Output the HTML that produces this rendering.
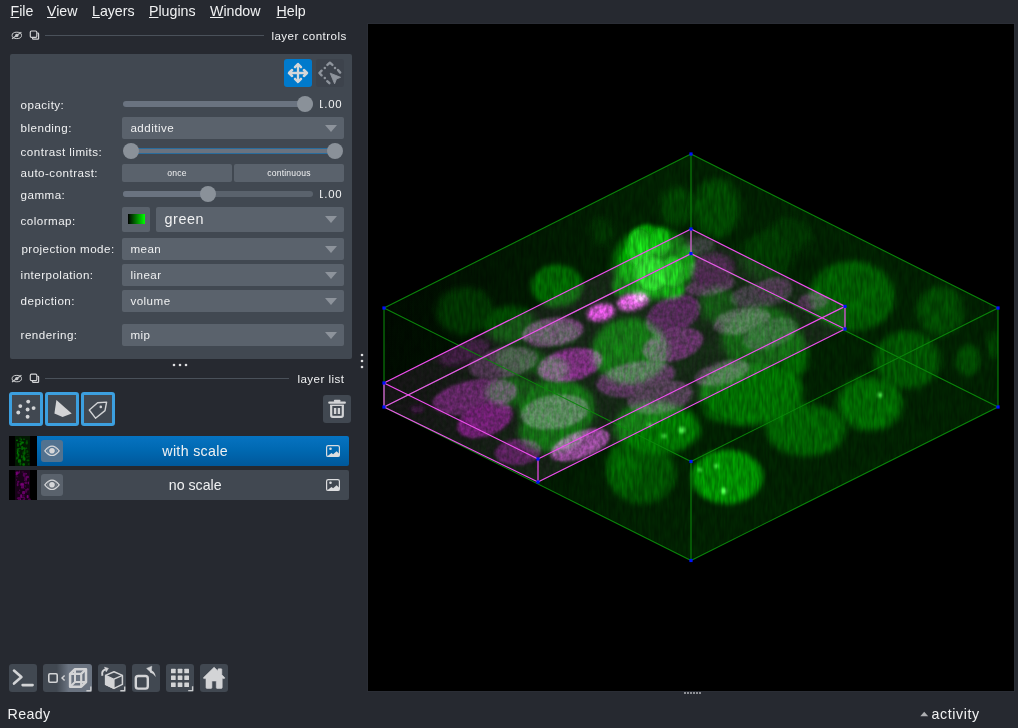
<!DOCTYPE html>
<html><head><meta charset="utf-8"><title>napari</title>
<style>
html,body{margin:0;padding:0;}
body{width:1018px;height:728px;overflow:hidden;background:#262930;position:relative;
 font-family:"Liberation Sans",sans-serif;color:#f0f1f2;}
.a{position:absolute;}
.t{position:absolute;white-space:nowrap;line-height:1;color:#f0f1f2;}
.menu{font-size:14.2px;top:4.4px;letter-spacing:0px;}
.menu u{text-decoration:underline;text-underline-offset:1px;text-decoration-thickness:1px;}
.lbl{font-size:11.6px;left:20.6px;letter-spacing:0.47px;}
.cb{position:absolute;left:122px;width:222px;height:22px;background:#5a626c;border-radius:2px;}
.cb span{position:absolute;left:8.4px;top:5.4px;font-size:11.6px;line-height:1;letter-spacing:0.47px;white-space:nowrap;}
.cb i{position:absolute;right:7px;top:7.5px;width:0;height:0;border-left:6.2px solid transparent;border-right:6.2px solid transparent;border-top:7.5px solid #8d939b;}
.trk{position:absolute;height:6px;border-radius:3px;}
.hd{position:absolute;width:16px;height:16px;border-radius:8px;background:#8a9199;}
.btn{position:absolute;background:#414851;border-radius:3px;}
.sbtn{position:absolute;height:18px;background:#5a626c;border-radius:2px;font-size:8.6px;text-align:center;line-height:18px;letter-spacing:0.2px;}
</style></head><body>
<div class="t menu" style="left:10.5px"><u>F</u>ile</div><div class="t menu" style="left:47px"><u>V</u>iew</div><div class="t menu" style="left:92px"><u>L</u>ayers</div><div class="t menu" style="left:149px"><u>P</u>lugins</div><div class="t menu" style="left:210px"><u>W</u>indow</div><div class="t menu" style="left:276.5px"><u>H</u>elp</div>
<!-- dock title: layer controls -->
<svg class="a" style="left:5px;top:25px" width="300" height="20" viewBox="5 25 300 20" ><g fill="none" stroke="#c9cacc" stroke-width="1"><ellipse cx="16.8" cy="35.4" rx="4.7" ry="3.2"/><circle cx="16.8" cy="35.4" r="1.7" fill="#c9cacc" stroke="none"/><path d="M12.0 38.8 L21.4 32.1" stroke-width="1.1"/></g><g fill="none" stroke="#d1d2d4" stroke-width="1.2"><path d="M32.6 37.8 V38.5 Q32.6 39.2 33.3 39.2 H37.9 Q38.6 39.2 38.6 38.5 V33.9 Q38.6 33.199999999999996 37.9 33.199999999999996 H37.3"/><rect x="30.3" y="31.0" width="6.5" height="6.4" rx="1.2" fill="#262930"/></g><rect x="45" y="35" width="219" height="1" fill="#4a515a"/></svg><div class="t" style="left:271.4px;top:29.799999999999997px;font-size:11.6px;letter-spacing:0.46px">layer controls</div>
<div class="a" style="left:10px;top:54px;width:342px;height:304.5px;background:#414851;border-radius:2px"></div>
<!-- mode buttons -->
<div class="a" style="left:284px;top:59px;width:28px;height:28px;background:#007acc;border-radius:3px"><svg width="28" height="28" viewBox="0 0 28 28" style="position:absolute;left:0;top:0"><path d="M14 5.5 V22.5 M5.5 14 H22.5" stroke="#d6d7d9" stroke-width="2.3" fill="none"/><g transform="rotate(0 14 14)"><path d="M11.0 8.1 L14 5.0 L17.0 8.1" fill="none" stroke="#d6d7d9" stroke-width="2.5" stroke-linecap="round" stroke-linejoin="round"/></g><g transform="rotate(90 14 14)"><path d="M11.0 8.1 L14 5.0 L17.0 8.1" fill="none" stroke="#d6d7d9" stroke-width="2.5" stroke-linecap="round" stroke-linejoin="round"/></g><g transform="rotate(180 14 14)"><path d="M11.0 8.1 L14 5.0 L17.0 8.1" fill="none" stroke="#d6d7d9" stroke-width="2.5" stroke-linecap="round" stroke-linejoin="round"/></g><g transform="rotate(270 14 14)"><path d="M11.0 8.1 L14 5.0 L17.0 8.1" fill="none" stroke="#d6d7d9" stroke-width="2.5" stroke-linecap="round" stroke-linejoin="round"/></g></svg></div>
<div class="a" style="left:316px;top:59px;width:28px;height:28px;background:#3d434c;border-radius:3px"><svg width="28" height="28" viewBox="0 0 28 28" style="position:absolute;left:0;top:0"><g fill="none" stroke="#8e949c" stroke-width="2.4" stroke-linecap="round" stroke-linejoin="round"><path d="M11.4 5.9 L13.9 3.7 L16.4 5.9"/><path d="M5.6 11.7 L3.4 14 L5.6 16.3"/><path d="M22.0 11.0 L24.2 13.6"/><path d="M11.2 22.2 L13.4 24.2"/></g><circle cx="8.8" cy="8.9" r="1.25" fill="#8e949c"/><circle cx="19.0" cy="8.9" r="1.25" fill="#8e949c"/><circle cx="8.8" cy="19.1" r="1.25" fill="#8e949c"/><path d="M14.2 14.2 L24.6 18.3 L20.4 20.0 L18.6 24.8 Z" fill="#8e949c" stroke="#8e949c" stroke-width="0.9" stroke-linejoin="round"/></svg></div>
<div class="t lbl" style="top:98.8px">opacity:</div><div class="t lbl" style="top:122.3px">blending:</div><div class="t lbl" style="top:145.8px">contrast limits:</div><div class="t lbl" style="top:167.3px">auto-contrast:</div><div class="t lbl" style="top:188.8px">gamma:</div><div class="t lbl" style="top:214.8px">colormap:</div><div class="t lbl" style="top:243.3px;left:21.4px">projection mode:</div><div class="t lbl" style="top:268.8px">interpolation:</div><div class="t lbl" style="top:294.8px">depiction:</div><div class="t lbl" style="top:328.8px">rendering:</div>
<!-- opacity slider -->
<div class="trk" style="left:123px;top:101px;width:190px;background:#6a7380"></div>
<div class="hd" style="left:297px;top:96px"></div>
<div class="a" style="left:319.6px;top:97px;width:25px;height:14px;overflow:hidden"><div class="t" style="left:-2.3px;top:1.9px;font-size:11.4px;letter-spacing:0.73px">1.00</div></div>
<div class="cb" style="top:117px"><span>additive</span><i></i></div><div class="cb" style="top:238px"><span>mean</span><i></i></div><div class="cb" style="top:264px"><span>linear</span><i></i></div><div class="cb" style="top:290px"><span>volume</span><i></i></div><div class="cb" style="top:324px"><span>mip</span><i></i></div>
<!-- contrast limits -->
<div class="a" style="left:131px;top:148px;width:204px;height:4px;background:#6a7380;border-top:1px solid #2a6c9c;border-bottom:1px solid #2a6c9c"></div>
<div class="hd" style="left:123px;top:143px"></div>
<div class="hd" style="left:327px;top:143px"></div>
<!-- auto-contrast -->
<div class="sbtn" style="left:122px;top:164px;width:110px">once</div>
<div class="sbtn" style="left:234px;top:164px;width:110px">continuous</div>
<!-- gamma -->
<div class="trk" style="left:123px;top:191px;width:190px;background:#5a626c"></div>
<div class="trk" style="left:123px;top:191px;width:88px;background:#6a7380"></div>
<div class="hd" style="left:200px;top:186px"></div>
<div class="a" style="left:319.6px;top:187px;width:25px;height:14px;overflow:hidden"><div class="t" style="left:-2.3px;top:1.9px;font-size:11.4px;letter-spacing:0.73px">1.00</div></div>
<!-- colormap -->
<div class="a" style="left:122px;top:207px;width:28px;height:24.5px;background:#5a626c;border-radius:2px"></div>
<div class="a" style="left:128px;top:214px;width:16.5px;height:10px;background:linear-gradient(90deg,#000,#00ff00)"></div>
<div class="cb" style="left:156px;top:207px;width:188px;height:25px"><span style="font-size:14.4px;top:5px;left:8.5px;letter-spacing:0.55px">green</span><i style="top:9px"></i></div>
<!-- splitter dots -->
<svg class="a" style="left:168px;top:362px" width="24" height="6" viewBox="168 362 24 6" ><circle cx="174" cy="365" r="1.3" fill="#dfe0e1"/><circle cx="180" cy="365" r="1.3" fill="#dfe0e1"/><circle cx="186" cy="365" r="1.3" fill="#dfe0e1"/></svg><svg class="a" style="left:359.3px;top:350px" width="6" height="24" viewBox="359.3 350 6 24" ><circle cx="362.3" cy="355" r="1.3" fill="#dfe0e1"/><circle cx="362.3" cy="361" r="1.3" fill="#dfe0e1"/><circle cx="362.3" cy="367" r="1.3" fill="#dfe0e1"/></svg>
<!-- dock title: layer list -->
<svg class="a" style="left:5px;top:368px" width="300" height="20" viewBox="5 368 300 20" ><g fill="none" stroke="#c9cacc" stroke-width="1"><ellipse cx="16.8" cy="378.6" rx="4.7" ry="3.2"/><circle cx="16.8" cy="378.6" r="1.7" fill="#c9cacc" stroke="none"/><path d="M12.0 382.0 L21.4 375.3" stroke-width="1.1"/></g><g fill="none" stroke="#d1d2d4" stroke-width="1.2"><path d="M32.6 381.0 V381.70000000000005 Q32.6 382.40000000000003 33.3 382.40000000000003 H37.9 Q38.6 382.40000000000003 38.6 381.70000000000005 V377.1 Q38.6 376.40000000000003 37.9 376.40000000000003 H37.3"/><rect x="30.3" y="374.20000000000005" width="6.5" height="6.4" rx="1.2" fill="#262930"/></g><rect x="45" y="378" width="244" height="1" fill="#4a515a"/></svg><div class="t" style="left:297.4px;top:373.0px;font-size:11.6px;letter-spacing:0.46px">layer list</div>
<!-- layer buttons -->
<div class="a" style="left:9px;top:392px;width:28px;height:28px;background:#414851;border:3px solid #3c9fdf;border-radius:3px"></div><div class="a" style="left:45px;top:392px;width:28px;height:28px;background:#414851;border:3px solid #3c9fdf;border-radius:3px"></div><div class="a" style="left:81px;top:392px;width:28px;height:28px;background:#414851;border:3px solid #3c9fdf;border-radius:3px"></div><svg class="a" style="left:9px;top:392px" width="110" height="34" viewBox="9 392 110 34" ><circle cx="28.2" cy="401.6" r="1.95" fill="#d3d4d6"/><circle cx="20.3" cy="406.1" r="1.95" fill="#d3d4d6"/><circle cx="33.6" cy="408.1" r="1.95" fill="#d3d4d6"/><circle cx="27.6" cy="409.5" r="1.95" fill="#d3d4d6"/><circle cx="18.3" cy="412.5" r="1.95" fill="#d3d4d6"/><circle cx="27.6" cy="416.8" r="1.95" fill="#d3d4d6"/><path d="M56.4 399.9 L71.7 413.4 L62.6 417.1 L54.4 413.4Z" fill="#d3d4d6"/><path d="M89.3 410 L97.6 402.8 L106.6 402.1 L105 410.6 L95.5 418.2Z" fill="none" stroke="#d3d4d6" stroke-width="1.4" stroke-linejoin="round"/><circle cx="100.8" cy="406.9" r="1.3" fill="#d3d4d6"/></svg><div class="a" style="left:323px;top:395px;width:28px;height:28px;background:#414851;border-radius:3px"></div><svg class="a" style="left:323px;top:395px" width="28" height="28" viewBox="323 395 28 28" ><rect x="328.2" y="401.6" width="17.7" height="2.1" rx="1" fill="#d3d4d6"/><rect x="333.9" y="399.7" width="6.6" height="2.4" rx="0.8" fill="#d3d4d6"/><path d="M331.2 405 V415.3 Q331.2 416.8 332.7 416.8 H341.3 Q342.8 416.8 342.8 415.3 V405" fill="none" stroke="#d3d4d6" stroke-width="2.2"/><rect x="333.9" y="408" width="2.4" height="6" fill="#d3d4d6"/><rect x="337.7" y="408" width="2.4" height="6" fill="#d3d4d6"/><rect x="330.1" y="404.6" width="13.7" height="1.4" fill="#d3d4d6"/></svg>
<!-- layer rows -->
<div class="a" style="left:37px;top:436px;width:312px;height:30px;background:linear-gradient(180deg,#0673c1 0%,#0069b2 45%,#00589b 100%);border-radius:0 2px 2px 0"></div><div class="a" style="left:37px;top:470px;width:312px;height:30px;background:#414851;border-radius:0 2px 2px 0"></div><div class="a" style="left:41px;top:440px;width:22px;height:22px;background:#52728f;border-radius:3px"></div><div class="a" style="left:41px;top:474px;width:22px;height:22px;background:#5a626c;border-radius:3px"></div><svg class="a" style="left:9px;top:436px" width="341" height="64" viewBox="9 436 341 64" ><rect x="9" y="436" width="28" height="30" fill="#000"/><rect x="15" y="436" width="15" height="30" fill="#021802"/><rect x="19.2" y="440.7" width="2.4" height="1.2" rx="0.8" fill="rgb(0,128,0)" opacity="0.62"/><rect x="16.2" y="452.8" width="3.0" height="1.6" rx="0.8" fill="rgb(0,71,0)" opacity="0.62"/><rect x="20.6" y="438.5" width="1.2" height="2.3" rx="0.8" fill="rgb(0,165,0)" opacity="0.62"/><rect x="22.4" y="463.0" width="2.4" height="2.7" rx="0.8" fill="rgb(0,67,0)" opacity="0.62"/><rect x="22.5" y="447.6" width="3.1" height="1.1" rx="0.8" fill="rgb(0,169,0)" opacity="0.62"/><rect x="16.7" y="448.2" width="2.2" height="2.7" rx="0.8" fill="rgb(0,131,0)" opacity="0.62"/><rect x="25.6" y="441.6" width="2.3" height="2.9" rx="0.8" fill="rgb(0,107,0)" opacity="0.62"/><rect x="16.3" y="456.4" width="2.2" height="2.9" rx="0.8" fill="rgb(0,123,0)" opacity="0.62"/><rect x="23.8" y="448.5" width="1.7" height="2.8" rx="0.8" fill="rgb(0,118,0)" opacity="0.62"/><rect x="19.7" y="443.5" width="1.4" height="3.3" rx="0.8" fill="rgb(0,70,0)" opacity="0.62"/><rect x="22.5" y="451.2" width="2.9" height="3.2" rx="0.8" fill="rgb(0,96,0)" opacity="0.62"/><rect x="22.9" y="438.5" width="2.1" height="1.5" rx="0.8" fill="rgb(0,103,0)" opacity="0.62"/><rect x="17.0" y="450.2" width="1.1" height="3.0" rx="0.8" fill="rgb(0,157,0)" opacity="0.62"/><rect x="22.3" y="458.6" width="2.8" height="2.0" rx="0.8" fill="rgb(0,104,0)" opacity="0.62"/><rect x="22.7" y="452.7" width="2.0" height="3.5" rx="0.8" fill="rgb(0,94,0)" opacity="0.62"/><rect x="21.2" y="455.1" width="1.1" height="3.1" rx="0.8" fill="rgb(0,142,0)" opacity="0.62"/><rect x="22.5" y="455.6" width="2.0" height="3.1" rx="0.8" fill="rgb(0,145,0)" opacity="0.62"/><rect x="19.5" y="462.8" width="1.8" height="2.8" rx="0.8" fill="rgb(0,123,0)" opacity="0.62"/><rect x="15.8" y="458.0" width="1.3" height="1.7" rx="0.8" fill="rgb(0,110,0)" opacity="0.62"/><rect x="26.9" y="450.4" width="1.4" height="2.2" rx="0.8" fill="rgb(0,95,0)" opacity="0.62"/><rect x="26.5" y="459.4" width="2.9" height="1.8" rx="0.8" fill="rgb(0,113,0)" opacity="0.62"/><rect x="27.8" y="455.6" width="1.8" height="1.7" rx="0.8" fill="rgb(0,70,0)" opacity="0.62"/><rect x="17.3" y="443.0" width="1.5" height="2.5" rx="0.8" fill="rgb(0,135,0)" opacity="0.62"/><rect x="17.4" y="444.4" width="1.3" height="2.6" rx="0.8" fill="rgb(0,138,0)" opacity="0.62"/><rect x="22.4" y="463.2" width="2.5" height="2.5" rx="0.8" fill="rgb(0,139,0)" opacity="0.62"/><rect x="23.5" y="457.2" width="2.0" height="3.6" rx="0.8" fill="rgb(0,147,0)" opacity="0.62"/><rect x="25.4" y="447.5" width="1.9" height="1.3" rx="0.8" fill="rgb(0,141,0)" opacity="0.62"/><rect x="20.2" y="441.8" width="3.2" height="2.3" rx="0.8" fill="rgb(0,74,0)" opacity="0.62"/><rect x="19.4" y="438.0" width="1.0" height="1.5" rx="0.8" fill="rgb(0,72,0)" opacity="0.62"/><rect x="27.3" y="453.7" width="1.2" height="1.6" rx="0.8" fill="rgb(0,108,0)" opacity="0.62"/><rect x="16.9" y="443.6" width="1.8" height="2.1" rx="0.8" fill="rgb(0,75,0)" opacity="0.62"/><rect x="16.5" y="450.2" width="3.2" height="2.4" rx="0.8" fill="rgb(0,99,0)" opacity="0.62"/><rect x="16.1" y="439.4" width="1.8" height="1.8" rx="0.8" fill="rgb(0,166,0)" opacity="0.62"/><rect x="24.0" y="451.0" width="1.5" height="3.9" rx="0.8" fill="rgb(0,106,0)" opacity="0.62"/><rect x="16.9" y="451.7" width="1.1" height="2.6" rx="0.8" fill="rgb(0,142,0)" opacity="0.62"/><rect x="26.2" y="456.0" width="1.6" height="2.1" rx="0.8" fill="rgb(0,81,0)" opacity="0.62"/><rect x="19.6" y="442.7" width="2.2" height="2.5" rx="0.8" fill="rgb(0,141,0)" opacity="0.62"/><rect x="17.9" y="459.2" width="3.2" height="3.6" rx="0.8" fill="rgb(0,163,0)" opacity="0.62"/><rect x="18.1" y="447.7" width="2.8" height="1.6" rx="0.8" fill="rgb(0,123,0)" opacity="0.62"/><rect x="19.6" y="437.3" width="1.1" height="1.8" rx="0.8" fill="rgb(0,93,0)" opacity="0.62"/><rect x="17.5" y="453.4" width="1.8" height="3.4" rx="0.8" fill="rgb(0,152,0)" opacity="0.62"/><rect x="27.8" y="463.2" width="1.8" height="1.7" rx="0.8" fill="rgb(0,89,0)" opacity="0.62"/><rect x="21.1" y="446.0" width="2.1" height="4.0" rx="0.8" fill="rgb(0,138,0)" opacity="0.62"/><rect x="25.9" y="449.9" width="2.4" height="3.4" rx="0.8" fill="rgb(0,70,0)" opacity="0.62"/><rect x="25.9" y="439.9" width="1.9" height="3.1" rx="0.8" fill="rgb(0,85,0)" opacity="0.62"/><rect x="21.2" y="441.5" width="2.7" height="2.0" rx="0.8" fill="rgb(0,162,0)" opacity="0.62"/><rect x="9" y="470" width="28" height="30" fill="#000"/><rect x="15" y="470" width="15" height="30" fill="#180218"/><rect x="20.9" y="486.2" width="3.0" height="2.4" rx="0.8" fill="rgb(125,0,125)" opacity="0.62"/><rect x="26.1" y="475.8" width="2.8" height="2.4" rx="0.8" fill="rgb(138,0,138)" opacity="0.62"/><rect x="25.3" y="473.1" width="1.7" height="1.3" rx="0.8" fill="rgb(163,0,163)" opacity="0.62"/><rect x="26.6" y="488.3" width="2.3" height="2.2" rx="0.8" fill="rgb(117,0,117)" opacity="0.62"/><rect x="23.5" y="487.7" width="1.3" height="1.0" rx="0.8" fill="rgb(127,0,127)" opacity="0.62"/><rect x="15.8" y="471.5" width="2.9" height="2.8" rx="0.8" fill="rgb(159,0,159)" opacity="0.62"/><rect x="21.0" y="482.8" width="2.9" height="2.6" rx="0.8" fill="rgb(141,0,141)" opacity="0.62"/><rect x="18.8" y="470.6" width="1.2" height="3.0" rx="0.8" fill="rgb(112,0,112)" opacity="0.62"/><rect x="28.0" y="498.4" width="2.8" height="3.1" rx="0.8" fill="rgb(100,0,100)" opacity="0.62"/><rect x="24.9" y="484.9" width="1.1" height="2.7" rx="0.8" fill="rgb(73,0,73)" opacity="0.62"/><rect x="20.2" y="494.2" width="1.9" height="3.9" rx="0.8" fill="rgb(168,0,168)" opacity="0.62"/><rect x="23.9" y="476.5" width="3.0" height="1.2" rx="0.8" fill="rgb(108,0,108)" opacity="0.62"/><rect x="27.7" y="481.6" width="1.2" height="2.9" rx="0.8" fill="rgb(159,0,159)" opacity="0.62"/><rect x="23.8" y="479.9" width="1.7" height="1.0" rx="0.8" fill="rgb(112,0,112)" opacity="0.62"/><rect x="24.9" y="473.8" width="1.5" height="1.3" rx="0.8" fill="rgb(67,0,67)" opacity="0.62"/><rect x="21.0" y="484.1" width="2.5" height="1.6" rx="0.8" fill="rgb(125,0,125)" opacity="0.62"/><rect x="17.5" y="491.0" width="1.3" height="2.9" rx="0.8" fill="rgb(74,0,74)" opacity="0.62"/><rect x="20.1" y="498.2" width="1.0" height="3.6" rx="0.8" fill="rgb(162,0,162)" opacity="0.62"/><rect x="22.7" y="498.4" width="1.0" height="1.6" rx="0.8" fill="rgb(169,0,169)" opacity="0.62"/><rect x="22.8" y="486.7" width="1.1" height="1.4" rx="0.8" fill="rgb(116,0,116)" opacity="0.62"/><rect x="18.4" y="492.1" width="1.7" height="1.9" rx="0.8" fill="rgb(69,0,69)" opacity="0.62"/><rect x="16.0" y="476.3" width="2.4" height="1.0" rx="0.8" fill="rgb(107,0,107)" opacity="0.62"/><rect x="19.8" y="483.2" width="3.1" height="2.5" rx="0.8" fill="rgb(133,0,133)" opacity="0.62"/><rect x="16.8" y="481.3" width="2.4" height="1.9" rx="0.8" fill="rgb(89,0,89)" opacity="0.62"/><rect x="25.6" y="477.5" width="1.4" height="3.2" rx="0.8" fill="rgb(130,0,130)" opacity="0.62"/><rect x="17.6" y="497.1" width="2.9" height="2.8" rx="0.8" fill="rgb(113,0,113)" opacity="0.62"/><rect x="15.6" y="473.6" width="2.1" height="1.8" rx="0.8" fill="rgb(154,0,154)" opacity="0.62"/><rect x="24.2" y="477.7" width="2.8" height="2.8" rx="0.8" fill="rgb(97,0,97)" opacity="0.62"/><rect x="21.8" y="496.5" width="3.1" height="1.4" rx="0.8" fill="rgb(121,0,121)" opacity="0.62"/><rect x="22.3" y="494.4" width="2.4" height="1.8" rx="0.8" fill="rgb(86,0,86)" opacity="0.62"/><rect x="24.7" y="472.4" width="1.9" height="1.7" rx="0.8" fill="rgb(65,0,65)" opacity="0.62"/><rect x="17.3" y="480.8" width="2.3" height="1.4" rx="0.8" fill="rgb(106,0,106)" opacity="0.62"/><rect x="16.8" y="483.1" width="1.7" height="3.2" rx="0.8" fill="rgb(126,0,126)" opacity="0.62"/><rect x="22.6" y="474.4" width="1.1" height="1.1" rx="0.8" fill="rgb(105,0,105)" opacity="0.62"/><rect x="24.1" y="497.5" width="1.0" height="2.9" rx="0.8" fill="rgb(121,0,121)" opacity="0.62"/><rect x="15.9" y="479.2" width="1.3" height="1.2" rx="0.8" fill="rgb(117,0,117)" opacity="0.62"/><rect x="22.1" y="491.1" width="3.0" height="3.2" rx="0.8" fill="rgb(150,0,150)" opacity="0.62"/><rect x="16.7" y="497.5" width="1.8" height="1.3" rx="0.8" fill="rgb(120,0,120)" opacity="0.62"/><rect x="26.7" y="494.9" width="1.9" height="3.4" rx="0.8" fill="rgb(170,0,170)" opacity="0.62"/><rect x="21.5" y="470.9" width="2.5" height="2.1" rx="0.8" fill="rgb(61,0,61)" opacity="0.62"/><rect x="22.9" y="472.7" width="2.4" height="4.0" rx="0.8" fill="rgb(113,0,113)" opacity="0.62"/><rect x="24.5" y="481.4" width="2.6" height="2.7" rx="0.8" fill="rgb(116,0,116)" opacity="0.62"/><rect x="21.0" y="485.7" width="2.1" height="2.5" rx="0.8" fill="rgb(99,0,99)" opacity="0.62"/><rect x="22.8" y="484.0" width="1.5" height="3.1" rx="0.8" fill="rgb(123,0,123)" opacity="0.62"/><rect x="25.1" y="489.0" width="2.1" height="3.7" rx="0.8" fill="rgb(107,0,107)" opacity="0.62"/><rect x="18.9" y="489.5" width="1.4" height="1.5" rx="0.8" fill="rgb(103,0,103)" opacity="0.62"/><path d="M44.8 450.8 Q52 441.40000000000003 59.2 450.8 Q52 460.2 44.8 450.8Z" fill="none" stroke="#d6d7d9" stroke-width="1.2"/><circle cx="52" cy="450.8" r="2.8" fill="#d6d7d9"/><circle cx="52" cy="450.8" r="4.3" fill="none" stroke="#d6d7d9" stroke-width="0.5" opacity="0.6"/><path d="M44.8 484.8 Q52 475.40000000000003 59.2 484.8 Q52 494.2 44.8 484.8Z" fill="none" stroke="#d6d7d9" stroke-width="1.2"/><circle cx="52" cy="484.8" r="2.8" fill="#d6d7d9"/><circle cx="52" cy="484.8" r="4.3" fill="none" stroke="#d6d7d9" stroke-width="0.5" opacity="0.6"/><rect x="326.6" y="445.6" width="12.8" height="10.9" rx="1.6" fill="none" stroke="#dcdddf" stroke-width="1.2"/><circle cx="330.5" cy="448.7" r="1.3" fill="#dcdddf"/><path d="M327.6 456 L331.5 453.1 L333.1 454.2 L336.6 451.2 L339.2 453.8 V456Z" fill="#dcdddf"/><rect x="326.6" y="479.6" width="12.8" height="10.9" rx="1.6" fill="none" stroke="#dcdddf" stroke-width="1.2"/><circle cx="330.5" cy="482.7" r="1.3" fill="#dcdddf"/><path d="M327.6 490 L331.5 487.1 L333.1 488.2 L336.6 485.2 L339.2 487.8 V490Z" fill="#dcdddf"/></svg><div class="t" style="left:162.3px;top:443.6px;font-size:14.2px;letter-spacing:0.34px">with scale</div><div class="t" style="left:168.8px;top:477.6px;font-size:14.2px;letter-spacing:0px">no scale</div>
<!-- bottom buttons -->
<div class="a" style="left:9px;top:664px;width:28px;height:28px;background:#414851;border-radius:3px"></div><div class="a" style="left:98px;top:664px;width:28px;height:28px;background:#414851;border-radius:3px"></div><div class="a" style="left:132px;top:664px;width:28px;height:28px;background:#414851;border-radius:3px"></div><div class="a" style="left:166px;top:664px;width:28px;height:28px;background:#414851;border-radius:3px"></div><div class="a" style="left:200px;top:664px;width:28px;height:28px;background:#414851;border-radius:3px"></div><div class="a" style="left:43px;top:664px;width:49px;height:28px;border-radius:3px;background:linear-gradient(90deg,#414851 0%,#414851 28%,#6a7380 52%,#6a7380 100%)"></div><svg class="a" style="left:9px;top:664px" width="220" height="28" viewBox="9 664 220 28" ><path d="M14 670.6 L21.4 677.1 L14 683.6" fill="none" stroke="#d3d4d6" stroke-width="2.6" stroke-linecap="round" stroke-linejoin="round"/><path d="M22.6 685.1 H32.6" stroke="#d3d4d6" stroke-width="2.6" stroke-linecap="round"/><rect x="48.8" y="673.8" width="8.4" height="8.4" rx="1.2" fill="none" stroke="#d3d4d6" stroke-width="1.6"/><path d="M64.6 675.4 L62 678 L64.6 680.6" fill="none" stroke="#d3d4d6" stroke-width="1.4"/><g fill="none" stroke="#d3d4d6" stroke-linejoin="round"><path d="M70.1 673.9 L75.0 669.2 H86.0 V682.0 L81.2 686.7 H70.1Z" stroke-width="2.5"/><path d="M70.1 673.9 H81.2 V686.7 M81.2 673.9 L86.0 669.2" stroke-width="2.2"/><path d="M75.0 669.2 V682.0 H86.0 M75.0 682.0 L70.1 686.7" stroke-width="2.0"/></g><path d="M86.4 690.8 H90.80000000000001 V686.4" fill="none" stroke="#c9cacc" stroke-width="1.4"/><g stroke="#d3d4d6" stroke-linejoin="round"><path d="M105.6 675.4 L114 671.8 L122.4 675.4 V684.4 L114 688.4 L105.6 684.4Z" fill="none" stroke-width="1.5"/><path d="M105.6 675.4 L114 679.2 V688.4 L105.6 684.4Z" fill="#d3d4d6" stroke-width="1.2"/><path d="M114 679.2 L122.4 675.4" fill="none" stroke-width="1.4"/></g><path d="M102.4 675.8 Q101.2 670.6 105.6 669.4" fill="none" stroke="#d3d4d6" stroke-width="1.9"/><path d="M104.6 667.2 L108.4 668.4 L106.2 671.8Z" fill="#d3d4d6" stroke="#d3d4d6" stroke-width="0.6" stroke-linejoin="round"/><path d="M120.3 690.8 H124.7 V686.4" fill="none" stroke="#c9cacc" stroke-width="1.4"/><rect x="135.8" y="676" width="12" height="12.6" rx="2.4" fill="none" stroke="#d3d4d6" stroke-width="2.4"/><path d="M155.8 677 Q155 670.8 149.4 669.8 L150.2 672.6 Q153.2 673.6 155.8 677Z" fill="#d3d4d6"/><path d="M146.6 668.4 L151.8 666.2 L151.2 672.6Z" fill="#d3d4d6" stroke="#d3d4d6" stroke-width="0.5" stroke-linejoin="round"/><rect x="171" y="668.8" width="4.7" height="4.5" rx="0.5" fill="#d3d4d6"/><rect x="171" y="675.6" width="4.7" height="4.5" rx="0.5" fill="#d3d4d6"/><rect x="171" y="682.4" width="4.7" height="4.5" rx="0.5" fill="#d3d4d6"/><rect x="177.7" y="668.8" width="4.7" height="4.5" rx="0.5" fill="#d3d4d6"/><rect x="177.7" y="675.6" width="4.7" height="4.5" rx="0.5" fill="#d3d4d6"/><rect x="177.7" y="682.4" width="4.7" height="4.5" rx="0.5" fill="#d3d4d6"/><rect x="184.3" y="668.8" width="4.7" height="4.5" rx="0.5" fill="#d3d4d6"/><rect x="184.3" y="675.6" width="4.7" height="4.5" rx="0.5" fill="#d3d4d6"/><rect x="184.3" y="682.4" width="4.7" height="4.5" rx="0.5" fill="#d3d4d6"/><path d="M188.2 690.6 H192.6 V686.2" fill="none" stroke="#c9cacc" stroke-width="1.4"/><path d="M214.1 667.2 L217.9 670.9 V669.4 Q217.9 668.8 218.5 668.8 H221.2 Q221.8 668.8 221.8 669.4 V674.8 L224.7 677.6 Q225 678.6 224 678.6 H222.2 V687.6 Q222.2 688.4 221.4 688.4 H217 Q216.3 688.4 216.3 687.6 V681 H211.9 V687.6 Q211.9 688.4 211.1 688.4 H206.8 Q206 688.4 206 687.6 V678.6 H204.2 Q203.2 678.6 203.5 677.6 Z" fill="#d3d4d6" stroke="#d3d4d6" stroke-width="0.6" stroke-linejoin="round"/></svg>
<!-- status bar -->
<div class="t" style="left:7.6px;top:707.2px;font-size:14.2px;letter-spacing:0.36px">Ready</div>
<svg class="a" style="left:920px;top:711px" width="10" height="6"><path d="M0.3 5.2 L4.2 0.8 L8.2 5.2Z" fill="#aeafb2"/></svg>
<div class="t" style="left:931.6px;top:707.2px;font-size:14.2px;letter-spacing:0.6px">activity</div>
<!-- bottom splitter handle -->
<div class="a" style="left:684px;top:691.5px;width:17px;height:2px;background:repeating-linear-gradient(90deg,#8c8e93 0 2px,transparent 2px 3px)"></div>
<!-- canvas -->
<div class="a" style="left:367px;top:23px;width:648px;height:669px;background:#2a2d35"></div>
<svg class="a" style="left:368px;top:24px;background:#000" width="646" height="667" viewBox="368 24 646 667"><defs><clipPath id="hx"><polygon points="691,154 998,308 998,407 691,560.5 384,407 384,308"/></clipPath><clipPath id="mx"><polygon points="691,229 845,306.4 845,329 538,482 384,407 384,383"/></clipPath><filter id="b1_5" x="-50%" y="-50%" width="200%" height="200%"><feGaussianBlur stdDeviation="1.5"/></filter><filter id="b2" x="-50%" y="-50%" width="200%" height="200%"><feGaussianBlur stdDeviation="2"/></filter><filter id="b2_5" x="-50%" y="-50%" width="200%" height="200%"><feGaussianBlur stdDeviation="2.5"/></filter><filter id="b3" x="-50%" y="-50%" width="200%" height="200%"><feGaussianBlur stdDeviation="3"/></filter><filter id="b4" x="-50%" y="-50%" width="200%" height="200%"><feGaussianBlur stdDeviation="4"/></filter><filter id="b5" x="-50%" y="-50%" width="200%" height="200%"><feGaussianBlur stdDeviation="5"/></filter><linearGradient id="lg" gradientUnits="userSpaceOnUse" x1="384" y1="0" x2="640" y2="0"><stop offset="0" stop-color="#000" stop-opacity="0.7"/><stop offset="0.5" stop-color="#000" stop-opacity="0.3"/><stop offset="1" stop-color="#000" stop-opacity="0"/></linearGradient><pattern id="vs" width="3" height="8" patternUnits="userSpaceOnUse"><rect x="0" y="0" width="1" height="8" fill="#000" opacity="0.045"/></pattern><filter id="tex" x="0" y="0" width="100%" height="100%" color-interpolation-filters="sRGB"><feTurbulence type="fractalNoise" baseFrequency="0.33 0.07" numOctaves="2" seed="4" result="n"/><feColorMatrix in="n" type="matrix" values="0 1.8 0 0 -0.4  0 1.8 0 0 -0.4  0 1.8 0 0 -0.4  0 0 0 0 1" result="m"/><feComposite in="SourceGraphic" in2="m" operator="arithmetic" k1="0.42" k2="0.80" k3="0" k4="0"/></filter><filter id="texm" x="0" y="0" width="100%" height="100%" color-interpolation-filters="sRGB"><feTurbulence type="fractalNoise" baseFrequency="0.3 0.22" numOctaves="2" seed="9" result="n"/><feColorMatrix in="n" type="matrix" values="0 1.8 0 0 -0.4  0 1.8 0 0 -0.4  0 1.8 0 0 -0.4  0 0 0 0 1" result="m"/><feComposite in="SourceGraphic" in2="m" operator="arithmetic" k1="0.5" k2="0.76" k3="0" k4="0"/></filter></defs><g clip-path="url(#hx)"><g filter="url(#tex)"><polygon points="691,154 998,308 998,407 691,560.5 384,407 384,308" fill="#012001"/><polygon points="691,154 998,308 998,407 691,560.5 384,407 384,308" fill="url(#lg)"/><ellipse cx="676" cy="206" rx="16" ry="20" fill="rgb(2,63,2)" filter="url(#b3)" style="mix-blend-mode:lighten"/><ellipse cx="716" cy="208" rx="24" ry="30" fill="rgb(2,68,2)" filter="url(#b3)" style="mix-blend-mode:lighten"/><ellipse cx="602" cy="232" rx="13" ry="14" fill="rgb(2,46,2)" filter="url(#b3)" style="mix-blend-mode:lighten"/><ellipse cx="788" cy="236" rx="24" ry="19" fill="rgb(2,49,2)" filter="url(#b3)" style="mix-blend-mode:lighten"/><ellipse cx="766" cy="256" rx="26" ry="24" fill="rgb(2,56,2)" filter="url(#b3)" style="mix-blend-mode:lighten"/><ellipse cx="557" cy="286" rx="26" ry="21" fill="rgb(2,101,2)" filter="url(#b2_5)" style="mix-blend-mode:lighten"/><ellipse cx="465" cy="311" rx="29" ry="24" fill="rgb(2,48,2)" filter="url(#b3)" style="mix-blend-mode:lighten"/><ellipse cx="511" cy="325" rx="26" ry="19" fill="rgb(2,72,2)" filter="url(#b3)" style="mix-blend-mode:lighten"/><ellipse cx="852" cy="296" rx="43" ry="35" fill="rgb(2,90,2)" filter="url(#b3)" style="mix-blend-mode:lighten"/><ellipse cx="940" cy="311" rx="24" ry="25" fill="rgb(2,70,2)" filter="url(#b3)" style="mix-blend-mode:lighten"/><ellipse cx="907" cy="360" rx="33" ry="29" fill="rgb(2,83,2)" filter="url(#b3)" style="mix-blend-mode:lighten"/><ellipse cx="968" cy="360" rx="12" ry="16" fill="rgb(2,72,2)" filter="url(#b2_5)" style="mix-blend-mode:lighten"/><ellipse cx="993" cy="345" rx="6" ry="14" fill="rgb(2,60,2)" filter="url(#b2)" style="mix-blend-mode:lighten"/><ellipse cx="870" cy="404" rx="33" ry="27" fill="rgb(2,101,2)" filter="url(#b3)" style="mix-blend-mode:lighten"/><ellipse cx="806" cy="430" rx="40" ry="26" fill="rgb(2,94,2)" filter="url(#b3)" style="mix-blend-mode:lighten"/><ellipse cx="751" cy="392" rx="52" ry="33" fill="rgb(2,110,2)" filter="url(#b3)" style="mix-blend-mode:lighten"/><ellipse cx="761" cy="338" rx="40" ry="32" fill="rgb(2,92,2)" filter="url(#b3)" style="mix-blend-mode:lighten"/><ellipse cx="718" cy="305" rx="19" ry="18" fill="rgb(2,77,2)" filter="url(#b3)" style="mix-blend-mode:lighten"/><ellipse cx="727" cy="477" rx="36" ry="27" fill="rgb(2,140,2)" filter="url(#b2_5)" style="mix-blend-mode:lighten"/><ellipse cx="642" cy="474" rx="34" ry="30" fill="rgb(2,79,2)" filter="url(#b3)" style="mix-blend-mode:lighten"/><ellipse cx="657" cy="428" rx="43" ry="26" fill="rgb(2,118,2)" filter="url(#b3)" style="mix-blend-mode:lighten"/><ellipse cx="630" cy="351" rx="38" ry="33" fill="rgb(2,110,2)" filter="url(#b3)" style="mix-blend-mode:lighten"/><ellipse cx="557" cy="409" rx="38" ry="30" fill="rgb(2,107,2)" filter="url(#b3)" style="mix-blend-mode:lighten"/><ellipse cx="520" cy="360" rx="25" ry="15" fill="rgb(2,70,2)" filter="url(#b3)" style="mix-blend-mode:lighten"/><ellipse cx="794" cy="356" rx="14" ry="22" fill="rgb(2,101,2)" filter="url(#b3)" style="mix-blend-mode:lighten"/><ellipse cx="551" cy="432" rx="32" ry="20" fill="rgb(2,105,2)" filter="url(#b3)" style="mix-blend-mode:lighten"/><ellipse cx="623" cy="467" rx="16" ry="24" fill="rgb(2,94,2)" filter="url(#b3)" style="mix-blend-mode:lighten"/><ellipse cx="733" cy="411" rx="30" ry="12" fill="rgb(2,88,2)" filter="url(#b3)" style="mix-blend-mode:lighten"/><ellipse cx="553" cy="333" rx="28" ry="13" fill="rgb(2,68,2)" filter="url(#b2_5)" style="mix-blend-mode:lighten"/><ellipse cx="552" cy="369" rx="17" ry="13" fill="rgb(2,88,2)" filter="url(#b2_5)" style="mix-blend-mode:lighten"/><ellipse cx="512" cy="392" rx="26" ry="15" fill="rgb(2,85,2)" filter="url(#b3)" style="mix-blend-mode:lighten"/><ellipse cx="653" cy="264" rx="41" ry="37" fill="rgb(0,105,0)" filter="url(#b3)" style="mix-blend-mode:lighten"/><ellipse cx="640" cy="248" rx="13" ry="20" fill="rgb(18,200,18)" filter="url(#b2)" style="mix-blend-mode:lighten"/><ellipse cx="660" cy="242" rx="11" ry="14" fill="rgb(9,185,9)" filter="url(#b2)" style="mix-blend-mode:lighten"/><ellipse cx="652" cy="274" rx="17" ry="17" fill="rgb(27,215,27)" filter="url(#b2_5)" style="mix-blend-mode:lighten"/><ellipse cx="629" cy="266" rx="10" ry="18" fill="rgb(0,170,0)" filter="url(#b2)" style="mix-blend-mode:lighten"/><ellipse cx="673" cy="272" rx="12" ry="16" fill="rgb(12,190,12)" filter="url(#b2)" style="mix-blend-mode:lighten"/><ellipse cx="650" cy="289" rx="22" ry="7" fill="rgb(0,150,0)" filter="url(#b2)" style="mix-blend-mode:lighten"/><ellipse cx="620" cy="286" rx="8" ry="10" fill="rgb(0,120,0)" filter="url(#b2)" style="mix-blend-mode:lighten"/><ellipse cx="686" cy="262" rx="8" ry="16" fill="rgb(0,150,0)" filter="url(#b2)" style="mix-blend-mode:lighten"/><ellipse cx="647" cy="232" rx="9" ry="7" fill="rgb(0,160,0)" filter="url(#b2)" style="mix-blend-mode:lighten"/><ellipse cx="672" cy="291" rx="12" ry="7" fill="rgb(0,160,0)" filter="url(#b2)" style="mix-blend-mode:lighten"/><circle cx="682" cy="430" r="3.2" fill="#5dff5d" filter="url(#b1_5)" opacity="0.8"/><circle cx="724" cy="491" r="3.2" fill="#5dff5d" filter="url(#b1_5)" opacity="0.8"/><circle cx="716" cy="466" r="2.2" fill="#5dff5d" filter="url(#b1_5)" opacity="0.8"/><circle cx="664" cy="436" r="2.2" fill="#5dff5d" filter="url(#b1_5)" opacity="0.8"/><circle cx="650" cy="425" r="2" fill="#5dff5d" filter="url(#b1_5)" opacity="0.8"/><circle cx="880" cy="395" r="2.5" fill="#5dff5d" filter="url(#b1_5)" opacity="0.8"/><circle cx="700" cy="470" r="2" fill="#5dff5d" filter="url(#b1_5)" opacity="0.8"/><polygon points="691,154 998,308 998,407 691,560.5 384,407 384,308" fill="url(#vs)"/></g></g><g clip-path="url(#mx)" style="mix-blend-mode:screen"><g filter="url(#texm)"><polygon points="691,229 845,306.4 845,329 538,482 384,407 384,383" fill="#140a14"/><ellipse cx="601" cy="312.5" rx="14" ry="8.5" transform="rotate(-12 601 312.5)" fill="rgb(208,62,208)" filter="url(#b2)"/><ellipse cx="633" cy="301.5" rx="16" ry="8.5" transform="rotate(-14 633 301.5)" fill="rgb(214,78,214)" filter="url(#b2)"/><ellipse cx="640" cy="299" rx="5" ry="2.5" transform="rotate(-15 640 299)" fill="rgb(240,170,240)" filter="url(#b1_5)"/><ellipse cx="553" cy="332" rx="31" ry="14" transform="rotate(-8 553 332)" fill="rgb(101,36,104)" filter="url(#b1_5)"/><ellipse cx="570" cy="365" rx="33" ry="16" transform="rotate(-12 570 365)" fill="rgb(117,21,120)" filter="url(#b1_5)"/><ellipse cx="503" cy="363" rx="35" ry="15" transform="rotate(-10 503 363)" fill="rgb(70,36,72)" filter="url(#b1_5)"/><ellipse cx="464" cy="352" rx="27" ry="10" transform="rotate(-20 464 352)" fill="rgb(58,7,60)" filter="url(#b2_5)"/><ellipse cx="475" cy="397" rx="43" ry="17" transform="rotate(-10 475 397)" fill="rgb(93,21,96)" filter="url(#b1_5)"/><ellipse cx="485" cy="420" rx="29" ry="16" transform="rotate(-20 485 420)" fill="rgb(105,14,108)" filter="url(#b1_5)"/><ellipse cx="555" cy="412" rx="34" ry="17" transform="rotate(-8 555 412)" fill="rgb(85,50,88)" filter="url(#b1_5)"/><ellipse cx="417" cy="409" rx="7" ry="4" transform="rotate(0 417 409)" fill="rgb(54,7,56)" filter="url(#b1_5)"/><ellipse cx="673" cy="315" rx="29" ry="18" transform="rotate(-25 673 315)" fill="rgb(81,14,84)" filter="url(#b1_5)"/><ellipse cx="710" cy="286" rx="25" ry="9" transform="rotate(-10 710 286)" fill="rgb(78,28,80)" filter="url(#b1_5)"/><ellipse cx="673" cy="345" rx="31" ry="16" transform="rotate(-15 673 345)" fill="rgb(93,21,96)" filter="url(#b1_5)"/><ellipse cx="761" cy="295" rx="31" ry="12" transform="rotate(-8 761 295)" fill="rgb(62,36,64)" filter="url(#b1_5)"/><ellipse cx="742" cy="321" rx="29" ry="13" transform="rotate(-10 742 321)" fill="rgb(78,50,80)" filter="url(#b1_5)"/><ellipse cx="770" cy="334" rx="28" ry="14" transform="rotate(-20 770 334)" fill="rgb(54,36,56)" filter="url(#b1_5)"/><ellipse cx="636" cy="379" rx="40" ry="17" transform="rotate(-10 636 379)" fill="rgb(85,28,88)" filter="url(#b1_5)"/><ellipse cx="660" cy="397" rx="33" ry="16" transform="rotate(-10 660 397)" fill="rgb(78,36,80)" filter="url(#b1_5)"/><ellipse cx="722" cy="373" rx="28" ry="11" transform="rotate(-15 722 373)" fill="rgb(78,36,80)" filter="url(#b1_5)"/><ellipse cx="518" cy="452" rx="23" ry="13" transform="rotate(-5 518 452)" fill="rgb(85,14,88)" filter="url(#b1_5)"/><ellipse cx="580" cy="445" rx="31" ry="13" transform="rotate(-20 580 445)" fill="rgb(140,50,144)" filter="url(#b1_5)"/><ellipse cx="813" cy="301" rx="15" ry="9" transform="rotate(-10 813 301)" fill="rgb(70,21,72)" filter="url(#b1_5)"/><ellipse cx="773" cy="288" rx="18" ry="10" transform="rotate(-10 773 288)" fill="rgb(70,28,72)" filter="url(#b1_5)"/><ellipse cx="712" cy="270" rx="22" ry="17" transform="rotate(-10 712 270)" fill="rgb(70,10,72)" filter="url(#b2)"/><ellipse cx="700" cy="246" rx="14" ry="9" transform="rotate(-10 700 246)" fill="rgb(54,36,56)" filter="url(#b2)"/></g></g><line x1="691" y1="154" x2="384" y2="308" stroke="#0a860a" stroke-width="1.1"/><line x1="691" y1="154" x2="998" y2="308" stroke="#0a860a" stroke-width="1.1"/><line x1="384" y1="308" x2="691" y2="461.5" stroke="#0a860a" stroke-width="1.1"/><line x1="998" y1="308" x2="691" y2="461.5" stroke="#0a860a" stroke-width="1.1"/><line x1="384" y1="308" x2="384" y2="407" stroke="#0a860a" stroke-width="1.1"/><line x1="691" y1="461.5" x2="691" y2="560.5" stroke="#0a860a" stroke-width="1.1"/><line x1="998" y1="308" x2="998" y2="407" stroke="#0a860a" stroke-width="1.1"/><line x1="691" y1="154" x2="691" y2="253.6" stroke="#0a860a" stroke-width="1.1"/><line x1="384" y1="407" x2="691" y2="560.5" stroke="#0a860a" stroke-width="1.1"/><line x1="691" y1="560.5" x2="998" y2="407" stroke="#0a860a" stroke-width="1.1"/><line x1="691" y1="253.6" x2="384" y2="407" stroke="#0a860a" stroke-width="1.1"/><line x1="691" y1="253.6" x2="998" y2="407" stroke="#0a860a" stroke-width="1.1"/><line x1="691" y1="229" x2="384" y2="383" stroke="#f04ef0" stroke-width="1.2"/><line x1="691" y1="229" x2="845" y2="306.4" stroke="#f04ef0" stroke-width="1.2"/><line x1="384" y1="383" x2="538" y2="459" stroke="#f04ef0" stroke-width="1.2"/><line x1="845" y1="306.4" x2="538" y2="459" stroke="#f04ef0" stroke-width="1.2"/><line x1="384" y1="383" x2="384" y2="407" stroke="#f04ef0" stroke-width="1.2"/><line x1="538" y1="459" x2="538" y2="482" stroke="#f04ef0" stroke-width="1.2"/><line x1="845" y1="306.4" x2="845" y2="329" stroke="#f04ef0" stroke-width="1.2"/><line x1="691" y1="229" x2="691" y2="253.6" stroke="#f04ef0" stroke-width="1.2"/><line x1="384" y1="407" x2="538" y2="482" stroke="#f04ef0" stroke-width="1.2"/><line x1="538" y1="482" x2="845" y2="329" stroke="#f04ef0" stroke-width="1.2"/><line x1="691" y1="253.6" x2="384" y2="407" stroke="#f04ef0" stroke-width="1.2"/><line x1="691" y1="253.6" x2="845" y2="329" stroke="#f04ef0" stroke-width="1.2"/><rect x="689.4" y="152.4" width="3.2" height="3.2" fill="#0010ff"/><rect x="996.4" y="306.4" width="3.2" height="3.2" fill="#0010ff"/><rect x="996.4" y="405.4" width="3.2" height="3.2" fill="#0010ff"/><rect x="689.4" y="558.9" width="3.2" height="3.2" fill="#0010ff"/><rect x="382.4" y="405.4" width="3.2" height="3.2" fill="#0010ff"/><rect x="382.4" y="306.4" width="3.2" height="3.2" fill="#0010ff"/><rect x="689.4" y="459.9" width="3.2" height="3.2" fill="#0010ff"/><rect x="689.4" y="252.0" width="3.2" height="3.2" fill="#0010ff"/><rect x="689.4" y="227.4" width="3.2" height="3.2" fill="#0010ff"/><rect x="843.4" y="304.79999999999995" width="3.2" height="3.2" fill="#0010ff"/><rect x="843.4" y="327.4" width="3.2" height="3.2" fill="#0010ff"/><rect x="536.4" y="480.4" width="3.2" height="3.2" fill="#0010ff"/><rect x="382.4" y="381.4" width="3.2" height="3.2" fill="#0010ff"/><rect x="536.4" y="457.4" width="3.2" height="3.2" fill="#0010ff"/></svg>
</body></html>
